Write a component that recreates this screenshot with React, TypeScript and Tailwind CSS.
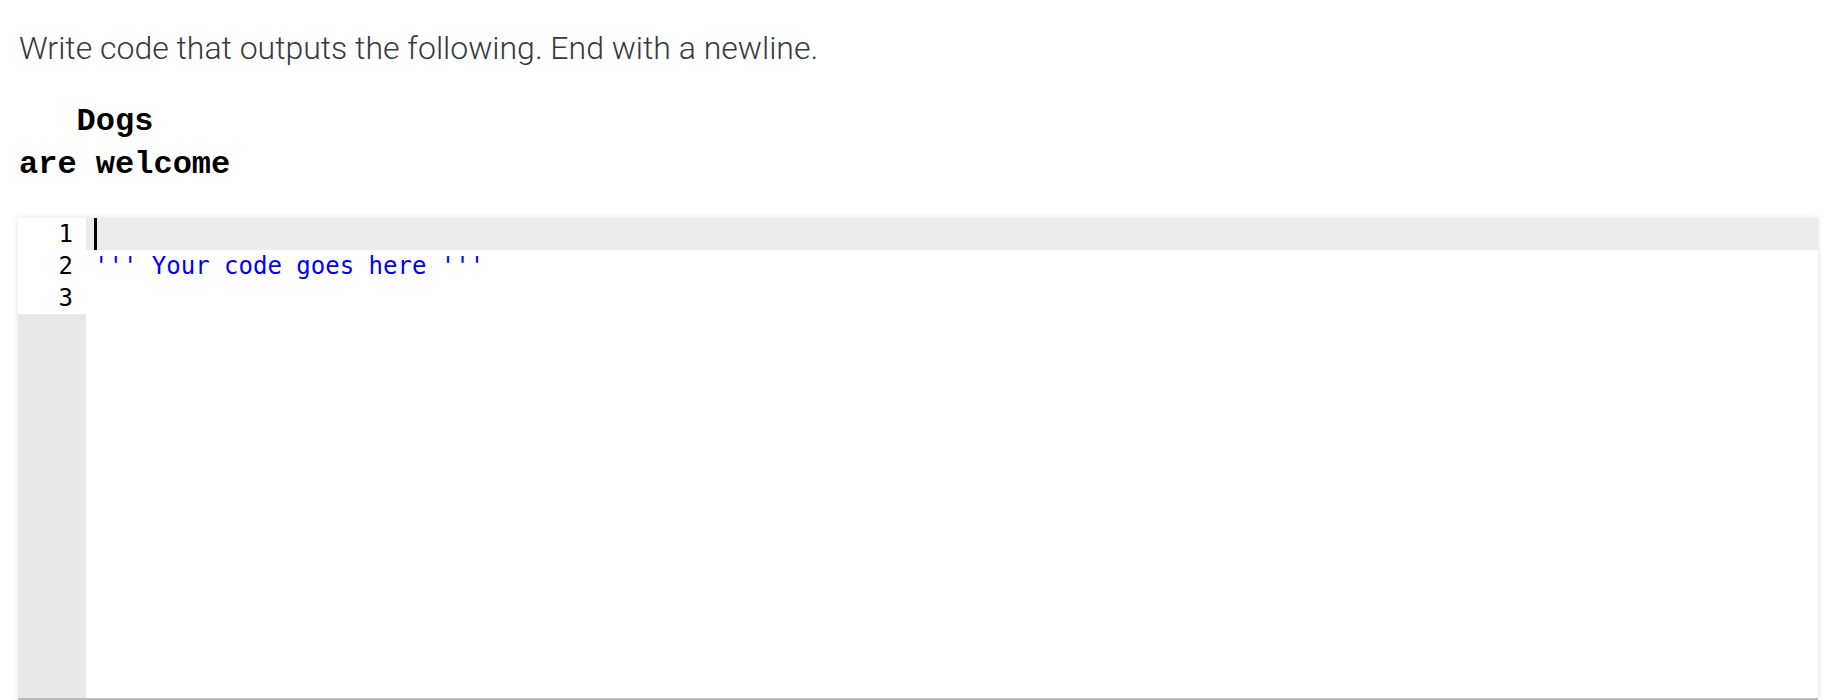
import React from 'react';

const codeLines = ['', "''' Your code goes here '''", ''];

const App: React.FC = () => {
  return (
    <div className="h-[700px] overflow-hidden bg-white px-[18px]">
      <p className="pt-[26px] pl-[1px] text-[32px] leading-[44px] font-light text-[#333a40] font-['Roboto',sans-serif]">
        Write code that outputs the following. End with a newline.
      </p>

      {/* Expected output */}
      <pre className="mt-[30px] pl-[1px] text-[32px] leading-[43px] font-bold text-black font-['Liberation_Mono','Courier_New',monospace]">
{`   Dogs
are welcome`}
      </pre>

      {/* Code editor */}
      <div className="mt-[32px] flex h-[482px] w-[1800px] border-b-2 border-[#bdbdbd] bg-white shadow-[0_0_6px_rgba(0,0,0,0.12)]">
        <div className="w-[68px] bg-[#e8e8e8]">
          {codeLines.map((_, i) => (
            <div
              key={i}
              className="h-[32px] bg-white pr-[13px] text-right text-[24px] leading-[32px] text-black font-['DejaVu_Sans_Mono',monospace]"
            >
              {i + 1}
            </div>
          ))}
        </div>
        <div className="flex-1">
          {codeLines.map((line, i) => (
            <div
              key={i}
              className={
                'relative h-[32px] pl-[8px] text-[24px] leading-[32px] whitespace-pre text-[#0000ff] font-[\'DejaVu_Sans_Mono\',monospace] ' +
                (i === 0 ? 'bg-[#ececec]' : '')
              }
            >
              {i === 0 && <span className="absolute left-[8px] top-0 h-[32px] w-[3px] bg-black" />}
              {line}
            </div>
          ))}
        </div>
      </div>
    </div>
  );
};

export default App;
